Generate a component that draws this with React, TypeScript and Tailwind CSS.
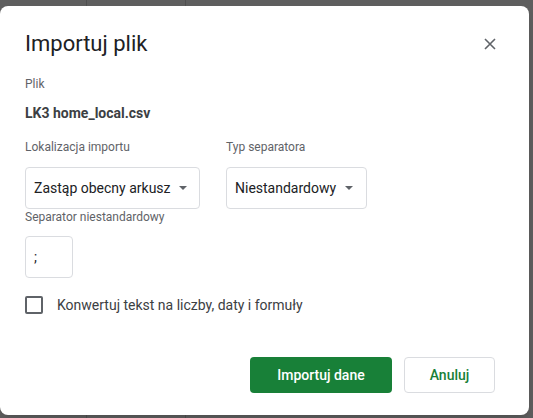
import React, { useState } from 'react';

function Caret() {
    return (
        <svg width="8" height="4" viewBox="0 0 8 4" className="shrink-0">
            <path d="M0 0 L8 0 L4 4 Z" fill="#5f6368" />
        </svg>
    );
}

export default function App() {
    const [convert, setConvert] = useState(false);

    return (
        <div className="relative w-[533px] h-[418px] overflow-hidden bg-[#5e5e5e]" style={{ fontFamily: 'Roboto, "Liberation Sans", sans-serif' }}>
            {/* sheet behind the dialog */}
            <div className="flex h-full">
                <div className="w-[87px] border-r border-[#4f4f4f]" />
                <div className="w-[99px] border-r border-[#4f4f4f]" />
            </div>

            <div className="absolute left-0 top-[6px] w-[529px] h-[409px] bg-white rounded-lg shadow-lg flex flex-col pl-[25px] pr-[34px]">
                <div className="mt-[24px] flex items-center justify-between h-[28px]">
                    <h1 className="text-[22px] leading-[28px] text-[#202124]">Importuj plik</h1>
                    <svg width="12" height="12" viewBox="0 0 12 12" className="mr-[-1px]">
                        <path d="M1 1 L11 11 M11 1 L1 11" stroke="#5f6368" strokeWidth="1.6" />
                    </svg>
                </div>

                <div className="mt-[18px] text-[12px] leading-[16px] text-[#5f6368]">Plik</div>
                <div className="mt-[11px] text-[14px] leading-[20px] font-bold text-[#3c4043]">LK3 home_local.csv</div>

                <div className="mt-[16px] flex gap-[26px]">
                    <div className="flex flex-col">
                        <div className="text-[12px] leading-[16px] text-[#5f6368]">Lokalizacja importu</div>
                        <div className="mt-[12px] w-[175px] h-[42px] border border-[#dadce0] rounded flex items-center pl-[8px] gap-[8px]">
                            <span className="text-[14px] text-[#202124] whitespace-nowrap">Zastąp obecny arkusz</span>
                            <Caret />
                        </div>
                    </div>
                    <div className="flex flex-col">
                        <div className="text-[12px] leading-[16px] text-[#5f6368]">Typ separatora</div>
                        <div className="mt-[12px] w-[141px] h-[42px] border border-[#dadce0] rounded flex items-center pl-[8px] gap-[9px]">
                            <span className="text-[14px] text-[#202124] whitespace-nowrap">Niestandardowy</span>
                            <Caret />
                        </div>
                    </div>
                </div>

                <div className="text-[12px] leading-[16px] text-[#5f6368]">Separator niestandardowy</div>
                <div className="mt-[11px] w-[48px] h-[42px] border border-[#dadce0] rounded flex items-center pl-[8px] text-[14px] text-[#202124]">;</div>

                <label className="mt-[18px] flex items-center h-[18px] cursor-pointer">
                    <span
                        onClick={() => setConvert(!convert)}
                        className="w-[18px] h-[18px] border-2 border-[#5f6368] rounded-[2px] shrink-0"
                    />
                    <span className="ml-[14px] text-[14px] text-[#3c4043]">Konwertuj tekst na liczby, daty i formuły</span>
                </label>

                <div className="mt-[43px] flex justify-end gap-[12px]">
                    <button className="w-[142px] h-[36px] rounded bg-[#188038] text-white text-[14px] font-medium">Importuj dane</button>
                    <button className="w-[91px] h-[36px] rounded border border-[#dadce0] text-[#188038] text-[14px] font-medium">Anuluj</button>
                </div>
            </div>
        </div>
    );
}
